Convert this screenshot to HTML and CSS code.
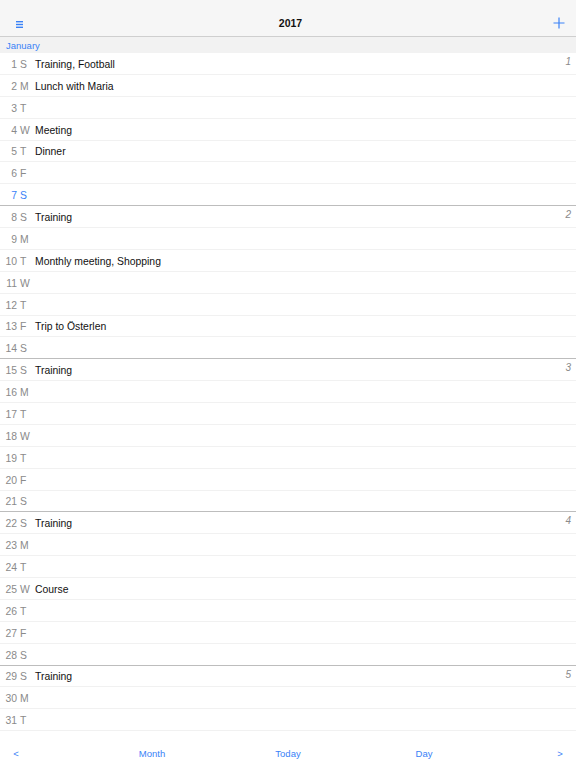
FILE: index.html
```html
<!DOCTYPE html>
<html lang="en">
<head>
    <meta charset="UTF-8">
    <meta name="viewport" content="width=device-width, initial-scale=1.0">
    <title>2017</title>
    <link rel="stylesheet" href="styles.css">
</head>
<body>

    <div class="app">
        <div class="topbar">
            <span class="menu-icon">
                <svg width="7" height="7" viewBox="0 0 7 7">
                    <rect x="0" y="0" width="7" height="1.4" fill="#3a82f7"/>
                    <rect x="0" y="2.8" width="7" height="1.4" fill="#3a82f7"/>
                    <rect x="0" y="5.6" width="7" height="1.4" fill="#3a82f7"/>
                </svg>
            </span>
            <span class="title">2017</span>
            <span class="add-icon">
                <svg width="12" height="12" viewBox="0 0 12 12">
                    <path d="M6 0.5 V11.5 M0.5 6 H11.5" stroke="#3a82f7" stroke-width="1.2" fill="none"/>
                </svg>
            </span>
        </div>

        <div class="month-label">January</div>

        <div class="days" id="days"></div>

        <div class="toolbar">
            <span class="tool">&lt;</span>
            <span class="tool">Month</span>
            <span class="tool">Today</span>
            <span class="tool">Day</span>
            <span class="tool">&gt;</span>
        </div>
    </div>

    <script>
        const letters = ['S', 'M', 'T', 'W', 'T', 'F', 'S'];
        const events = {
            1: 'Training, Football',
            2: 'Lunch with Maria',
            4: 'Meeting',
            5: 'Dinner',
            8: 'Training',
            10: 'Monthly meeting, Shopping',
            13: 'Trip to Österlen',
            15: 'Training',
            22: 'Training',
            25: 'Course',
            29: 'Training'
        };
        const today = 7;

        let html = '';
        for (let d = 1; d <= 31; d++) {
            let cls = 'day';
            if (d % 7 === 0) cls += ' week-end';
            if (d === today) cls += ' today';
            html += `<div class="${cls}">`;
            html += `<span class="num">${d}</span>`;
            html += `<span class="letter">${letters[(d - 1) % 7]}</span>`;
            html += `<span class="event">${events[d] || ''}</span>`;
            if (d % 7 === 1) {
                html += `<span class="week">${Math.floor(d / 7) + 1}</span>`;
            }
            html += '</div>';
        }
        document.getElementById('days').innerHTML = html;
    </script>

</body>
</html>
```

FILE: styles.css
```css
body {
    margin: 0;
    padding: 0;
    font-family: "Liberation Sans", Arial, sans-serif;
    background-color: #fff;
}
.app {
    width: 576px;
    height: 768px;
    display: flex;
    flex-direction: column;
    overflow: hidden;
}
.topbar {
    height: 37px;
    box-sizing: border-box;
    background-color: #f6f6f6;
    border-bottom: 1px solid #cfcfcf;
    display: flex;
    align-items: center;
    justify-content: space-between;
    padding: 10px 11px 0 16px;
}
.menu-icon {
    display: flex;
    width: 12px;
    margin-top: 2px;
}
.add-icon {
    display: flex;
    width: 12px;
    justify-content: flex-end;
}
.title {
    font-size: 10.5px;
    font-weight: bold;
    color: #111;
}
.month-label {
    height: 16px;
    box-sizing: border-box;
    padding-top: 1px;
    line-height: 15px;
    background-color: #f2f2f2;
    color: #3a82f7;
    font-size: 9.5px;
    padding-left: 6px;
}
.days {
    display: flex;
    flex-direction: column;
}
.day {
    height: 21.875px;
    box-sizing: border-box;
    border-bottom: 1px solid #f1f1f1;
    display: flex;
    align-items: center;
    font-size: 10.4px;
    padding-top: 2px;
}
.day.week-end {
    border-bottom-color: #bdbdbd;
}
.num {
    width: 17px;
    text-align: right;
    margin-right: 3px;
    color: #8a8a8a;
}
.letter {
    width: 15px;
    color: #8a8a8a;
}
.today .num, .today .letter {
    color: #3a82f7;
}
.event {
    color: #111;
}
.week {
    margin-left: auto;
    align-self: flex-start;
    margin-top: 1px;
    margin-right: 5px;
    font-style: italic;
    font-size: 10px;
    color: #8a8a8a;
}
.toolbar {
    flex: 1;
    display: flex;
    justify-content: space-between;
    align-items: center;
    padding-top: 7px;
}
.tool {
    width: 32px;
    text-align: center;
    font-size: 9.5px;
    color: #3a82f7;
}
```
